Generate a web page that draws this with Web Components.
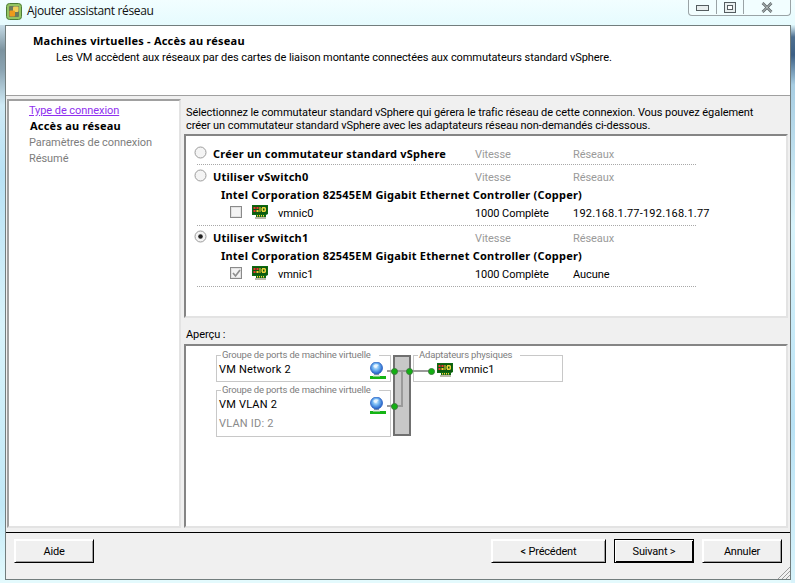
<!DOCTYPE html>
<html lang="fr">
<head>
<meta charset="utf-8">
<title>Ajouter assistant réseau</title>
<style>
html, body { margin: 0; height: 100%; overflow: hidden; }
body {
  width: 795px;
  height: 583px;
  font: 11px Roboto, sans-serif;
  letter-spacing: -0.07px;
  color: #000;
  background: #e4fafd;
}
</style>
</head>
<body>
<wizard-app></wizard-app>

<template id="nic-tpl">
<style>
:host { display: inline-block; width: 17px; height: 15px; line-height: 0; }
</style>
<svg width="17" height="15" viewBox="0 0 17 15">
  <path d="M3 12h11v2H3z" fill="#b9b9a8"/>
  <path d="M0 0h16v9l-2 1v2H4v-2H0z" fill="#0e6a12"/>
  <path d="M1 1h14v8H1z" fill="#0c5a10"/>
  <path d="M1.500 2h2v2h-2zM4.500 2h2v2h-2zM1.500 5h2v2h-2z" fill="#e33"/>
  <path d="M4.500 5h2v2h-2zM7.500 2h1v5h-1z" fill="#fc3"/>
  <path d="M10 2h3.500v1H14v3h-.5v1H10V6h-.5V3h.5zm1 1.500v2h1.500v-2z" fill="#e8d23a"/>
  <path d="M5 10h1v1.500H5zM7 10h1v1.500H7zM9 10h1v1.500H9zM11 10h1v1.500h-1z" fill="#ffd23c"/>
</svg>
</template>

<template id="globe-tpl">
<style>
:host { display: block; width: 16px; height: 17px; line-height: 0; }
</style>
<svg width="16" height="17" viewBox="0 0 16 17">
  <defs>
    <radialGradient id="g" cx="0.45" cy="0.4" r="0.62">
      <stop offset="0" stop-color="#e4f4ff"/>
      <stop offset="0.45" stop-color="#6fb4f2"/>
      <stop offset="1" stop-color="#1c55c0"/>
    </radialGradient>
  </defs>
  <path d="M4 11h5v3H4z" fill="#8c9aa6"/>
  <circle cx="6.500" cy="6" r="6" fill="url(#g)" stroke="#2a62c4" stroke-width=".8"/>
  <path d="M3.500 3.500c1.500-1.500 4-1.500 5.500-.5-1 1-1.500.5-2 2-.8 1-2.500 1-3.500-.3z" fill="#f2faff" opacity=".8"/>
  <path d="M0 14h16v3H0z" fill="#14b414"/>
  <path d="M3 13h7v1.500H3z" fill="#e6e6e6"/>
</svg>
</template>

<script>
// Small helper so that every element below gets an open shadow root from its markup
function shadow(el, html) {
  const root = el.attachShadow({ mode: 'open' });
  root.innerHTML = html;
  return root;
}

// Tahoma bold is much wider than Roboto bold, Noto with a little tracking is nearer
const BOLD = 'font: bold 11px "Noto Sans", sans-serif; letter-spacing: 0.22px;';

class NicIcon extends HTMLElement {
  constructor() {
    super();
    this.attachShadow({ mode: 'open' })
      .appendChild(document.getElementById('nic-tpl').content.cloneNode(true));
  }
}
customElements.define('nic-icon', NicIcon);

class GlobeIcon extends HTMLElement {
  constructor() {
    super();
    this.attachShadow({ mode: 'open' })
      .appendChild(document.getElementById('globe-tpl').content.cloneNode(true));
  }
}
customElements.define('globe-icon', GlobeIcon);

class TitleBar extends HTMLElement {
  constructor() {
    super();
    shadow(this, `
<style>
:host { display: flex; height: 25px; position: relative; box-sizing: border-box; padding: 2px 0 0 6px; gap: 4px;
  background: linear-gradient(#f2feff, #e6fbfe); }
svg { flex: none; margin-top: 1px; }
.t { font: 12px "Open Sans", sans-serif; letter-spacing: -0.35px; line-height: 18px; color: #111; }
.ctl { position: absolute; left: 688px; top: 0; width: 103px; height: 16px; box-sizing: border-box; display: flex;
  border: 1px solid #9aa3a6; border-top: 0; border-radius: 0 0 4px 4px; background: #f2feff; }
.ctl div { display: flex; align-items: center; justify-content: center; height: 14px; }
.ctl div + div { border-left: 1px solid #9aa3a6; }
</style>
<svg width="17" height="17" viewBox="0 0 17 17">
  <rect x=".5" y=".5" width="15" height="16" rx="3" fill="#94c462" stroke="#4c7c36"/>
  <rect x="3" y="3" width="10" height="11" rx="1" fill="#6b7a5c"/>
  <rect x="7" y="3.500" width="5.500" height="5.500" rx="1" fill="#f2cf5a"/>
  <rect x="3.500" y="7.500" width="5.500" height="6" rx="1" fill="#ee9a1c"/>
</svg>
<span class="t"><slot></slot></span>
<div class="ctl">
  <div style="width:27px"><svg width="13" height="7"><rect x=".5" y="1.500" width="12" height="5" fill="#e8eeee" stroke="#555d60"/></svg></div>
  <div style="width:26px"><svg width="12" height="11"><rect x=".5" y=".5" width="11" height="10" fill="#e8eeee" stroke="#555d60"/><rect x="3.500" y="3.500" width="5" height="4" fill="#fff" stroke="#555d60"/></svg></div>
  <div style="flex:1"><svg width="12" height="11"><path d="M1.500 1l9 9M10.500 1l-9 9" stroke="#5c6466" stroke-width="2.600" fill="none"/><path d="M1.500 1l9 9M10.500 1l-9 9" stroke="#e8eeee" stroke-width=".8" fill="none"/></svg></div>
</div>`);
  }
}
customElements.define('title-bar', TitleBar);

class WizardHeader extends HTMLElement {
  constructor() {
    super();
    shadow(this, `
<style>
:host { display: block; height: 70px; box-sizing: border-box; background: #fff; padding: 7px 0 0 27px;
  border-bottom: 1px solid #a0a0a0; line-height: 16px; }
b { display: block; ${BOLD} line-height: 15px; }
p { margin: 0; padding: 2px 0 0 23px; }
</style>
<b>${this.getAttribute('heading')}</b>
<p><slot></slot></p>`);
  }
}
customElements.define('wizard-header', WizardHeader);

class SunkenBox extends HTMLElement {
  constructor() {
    super();
    shadow(this, `
<style>
:host { display: block; box-sizing: border-box; background: #fff;
  border-style: solid; border-width: 2px; border-color: var(--edge, #a0a0a0) #e3e3e3 #e3e3e3 var(--edge, #a0a0a0); }
</style>
<slot></slot>`);
  }
}
customElements.define('sunken-box', SunkenBox);

class NavList extends HTMLElement {
  constructor() {
    super();
    shadow(this, `
<style>
:host { display: block; padding: 2px 0 0 20px; line-height: 16px; white-space: nowrap; }
</style>
<slot></slot>`);
  }
}
customElements.define('nav-list', NavList);

class NavItem extends HTMLElement {
  constructor() {
    super();
    const state = this.getAttribute('state');
    const rule = {
      visited: 'color:#8f2fef;text-decoration:underline;',
      current: BOLD + 'line-height:16px;margin:-1px 0 1px;padding-left:1px;',
      todo: 'color:#7d7d7d;'
    }[state];
    shadow(this, `<style>:host { display: block; ${rule} }</style><slot></slot>`);
  }
}
customElements.define('nav-item', NavItem);

class SwitchOption extends HTMLElement {
  constructor() {
    super();
    const checked = this.hasAttribute('checked');
    const adapter = this.getAttribute('adapter');
    const nic = this.getAttribute('nic');
    const nicChecked = this.hasAttribute('nic-checked');
    const nets = this.getAttribute('networks') || '';
    // the address range runs wider than the plain words do
    const netStyle = /^\d/.test(nets) ? ' style="letter-spacing:.2px"' : '';
    const rows = adapter ? `
<b class="adapter">${adapter}</b>
<div class="name nicrow">
  <span class="check">${nicChecked ? '<svg width="11" height="11"><path d="M2 5l2.500 3L9 2" fill="none" stroke="#8f8f8f" stroke-width="1.700"/></svg>' : ''}</span>
  <nic-icon></nic-icon>
  <span>${nic}</span>
</div>
<span class="nicrow">${this.getAttribute('speed')}</span>
<span class="nicrow"${netStyle}>${nets}</span>` : '';
    shadow(this, `
<style>
:host { display: grid; grid-template-columns: 278px 98px 1fr; grid-auto-rows: auto; width: 499px; white-space: nowrap;
  border-bottom: 1px dotted #a8a8a8; box-sizing: content-box; }
b { ${BOLD} }
.name { display: flex; align-items: center; }
.head { height: 22px; align-items: center; display: flex; box-sizing: border-box; padding-top: 1px; }
.radio { width: 13px; height: 13px; margin: -2px 6px 0 -3px; flex: none; }
.col { color: #9a9a9a; padding-top: 3px; }
.adapter { grid-column: 1 / -1; padding-left: 24px; height: 14px; line-height: 15px; }
.nicrow { height: 24px; display: flex; align-items: center; }
.check { width: 10px; height: 10px; border: 1px solid #8a8a8a; background: #f4f4f4; margin: -2px 0 0 33px; display: flex;
  box-shadow: inset 0 0 0 1px #e2e2e2; align-items: center; justify-content: center; }
nic-icon { margin: -2px 0 0 10px; }
.name span:last-child { margin-left: 9px; }
</style>
<div class="name head">
  <svg class="radio" viewBox="0 0 13 13"><circle cx="6.500" cy="6.500" r="5.500" fill="#f4f4f4" stroke="#9c9c9c"/>${checked ? '<circle cx="6.500" cy="6.500" r="2.300" fill="#222"/>' : ''}</svg>
  <b><slot></slot></b>
</div>
<span class="col head">Vitesse</span>
<span class="col head">Réseaux</span>
${rows}`);
  }
}
customElements.define('switch-option', SwitchOption);

class PortBox extends HTMLElement {
  constructor() {
    super();
    shadow(this, `
<style>
:host { position: absolute; box-sizing: border-box; border: 1px solid #c8c8c8; background: #fff; padding: 6px 0 0 2px; line-height: 16px; white-space: nowrap; letter-spacing: .2px; }
.legend { position: absolute; left: 4px; top: -8px; padding: 0 8px 0 1px; background: #fff; color: #7d7d7d; font-size: 9.500px; letter-spacing: -0.18px; line-height: 14px; }
</style>
<span class="legend">${this.getAttribute('legend')}</span>
<slot></slot>`);
  }
}
customElements.define('port-box', PortBox);

class NetDiagram extends HTMLElement {
  constructor() {
    super();
    shadow(this, `
<style>
:host { display: block; position: relative; height: 180px; }
.abs, globe-icon, nic-icon, .dot, .wire { position: absolute; }
.sw { position: absolute; left: 207px; top: 9px; width: 18px; height: 81px; box-sizing: border-box; border: 2px solid #707070; background: #c8c8c8; }
.wire { background: #9a9a9a; }
.dot { width: 7px; height: 7px; border-radius: 50%; background: #12b012; border: 1px solid #3c7a3c; box-sizing: border-box; }
.gray { color: #8a8a8a; margin-top: 3px; }
</style>
<port-box legend="Groupe de ports de machine virtuelle" style="left:30px;top:9px;width:175px;height:27px">VM Network 2</port-box>
<port-box legend="Groupe de ports de machine virtuelle" style="left:30px;top:44px;width:175px;height:47px">VM VLAN 2<div class="gray">VLAN ID: 2</div></port-box>
<div class="sw"></div>
<port-box legend="Adaptateurs physiques" style="left:227px;top:9px;width:150px;height:27px"></port-box>
<globe-icon style="left:184px;top:16px"></globe-icon>
<globe-icon style="left:184px;top:51px"></globe-icon>
<nic-icon style="left:251px;top:17px"></nic-icon>
<span style="position:absolute;left:273px;top:16px;line-height:16px">vmnic1</span>
<div class="wire" style="left:201px;top:24px;width:44px;height:2px"></div>
<div class="wire" style="left:201px;top:59px;width:15px;height:2px"></div>
<div class="wire" style="left:215px;top:25px;width:2px;height:36px"></div>
<div class="dot" style="left:205px;top:22px"></div>
<div class="dot" style="left:220px;top:22px"></div>
<div class="dot" style="left:242px;top:22px"></div>
<div class="dot" style="left:205px;top:57px"></div>`);
  }
}
customElements.define('net-diagram', NetDiagram);

class WinButton extends HTMLElement {
  constructor() {
    super();
    const main = this.hasAttribute('default');
    shadow(this, `
<style>
:host { display: flex; align-items: center; justify-content: center; height: 24px; box-sizing: border-box; background: #f0f0f0;
  letter-spacing: -0.2px;
  ${main
    ? 'border: 1px solid #000; box-shadow: inset 1px 1px 0 #fff, inset -1px -1px 0 #000;'
    : 'border-style: solid; border-width: 1px; border-color: #fff #000 #000 #fff; box-shadow: inset 1px 1px 0 #fff, inset -1px -1px 0 #a0a0a0;'} }
</style>
<slot></slot>`);
  }
}
customElements.define('win-button', WinButton);

class ButtonBar extends HTMLElement {
  constructor() {
    super();
    shadow(this, `
<style>
:host { display: flex; height: 47px; box-sizing: border-box; padding: 6px 8px 0 8px; border-top: 1px solid #000; background: #f0f0f0; position: relative; }
::slotted(win-button) { flex: none; }
.sp { flex: 1; }
.grip { position: absolute; right: 0; bottom: 0; }
</style>
<slot name="left"></slot><div class="sp"></div>
<slot></slot>
<svg class="grip" width="13" height="13"><path d="M13 1L1 13M13 5L5 13M13 9L9 13" stroke="#9c9c9c" fill="none"/></svg>`);
  }
}
customElements.define('button-bar', ButtonBar);

class WizardApp extends HTMLElement {
  constructor() {
    super();
    shadow(this, `
<style>
:host { display: flex; flex-direction: column; width: 795px; height: 583px; position: relative; }
.edge { position: absolute; top: 25px; width: 5px; height: 558px; }
.win { flex: none; width: 786px; height: 555px; margin-left: 5px; box-sizing: border-box; border: 1px solid #727d7d;
  display: flex; flex-direction: column; background: #f0f0f0; }
.main { flex: 1; display: grid; grid-template-columns: 174px 1fr; padding: 3px 2px 4px 1px; min-height: 0; }
.right { display: flex; flex-direction: column; min-width: 0; padding-left: 3px; }
.intro { height: 35px; box-sizing: border-box; padding: 7px 0 0 2px; line-height: 13px; white-space: nowrap; }
.list { height: 184px; padding: 6px 0 0 11px; box-sizing: border-box; --edge: #858585; }
.pv { height: 26px; line-height: 16px; padding: 9px 0 0 2px; box-sizing: border-box; }
.prev { flex: 1; margin-left: 0; --edge: #858585; }
</style>
<div class="edge" style="left:0;background:linear-gradient(#c5dbe6 0,#7c939f 25px,#8ba4b2 45px,#cfeaf6 80px,#b9e2f5 150px,#d8f3fb 300px,#c2e9f7 480px,#e4fafd 558px)"></div>
<div class="edge" style="right:0;width:4px;background:linear-gradient(#dff6fb 0,#4e6f8f 12px,#3c5f84 30px,#a7cde2 60px,#d8f3fb 200px,#b9e2f5 400px,#d8f3fb 558px)"></div>
<title-bar>Ajouter assistant réseau</title-bar>
<div class="win">
  <wizard-header heading="Machines virtuelles - Accès au réseau">Les VM accèdent aux réseaux par des cartes de liaison montante connectées aux commutateurs standard vSphere.</wizard-header>
  <div class="main">
    <sunken-box>
      <nav-list>
        <nav-item state="visited">Type de connexion</nav-item>
        <nav-item state="current">Accès au réseau</nav-item>
        <nav-item state="todo">Paramètres de connexion</nav-item>
        <nav-item state="todo">Résumé</nav-item>
      </nav-list>
    </sunken-box>
    <div class="right">
      <div class="intro">Sélectionnez le commutateur standard vSphere qui gérera le trafic réseau de cette connexion. Vous pouvez également<br>créer un commutateur standard vSphere avec les adaptateurs réseau non-demandés ci-dessous.</div>
      <sunken-box class="list">
        <switch-option>Créer un commutateur standard vSphere</switch-option>
        <switch-option adapter="Intel Corporation 82545EM Gigabit Ethernet Controller (Copper)" nic="vmnic0" speed="1000 Complète" networks="192.168.1.77-192.168.1.77">Utiliser vSwitch0</switch-option>
        <switch-option checked nic-checked adapter="Intel Corporation 82545EM Gigabit Ethernet Controller (Copper)" nic="vmnic1" speed="1000 Complète" networks="Aucune">Utiliser vSwitch1</switch-option>
      </sunken-box>
      <div class="pv">Aperçu :</div>
      <sunken-box class="prev"><net-diagram></net-diagram></sunken-box>
    </div>
  </div>
  <button-bar>
    <win-button slot="left" style="width:80px">Aide</win-button>
    <win-button style="width:115px;margin-right:8px">&lt; Précédent</win-button>
    <win-button default style="width:80px;margin-right:8px">Suivant &gt;</win-button>
    <win-button style="width:80px">Annuler</win-button>
  </button-bar>
</div>`);
  }
}
customElements.define('wizard-app', WizardApp);
</script>
</body>
</html>
